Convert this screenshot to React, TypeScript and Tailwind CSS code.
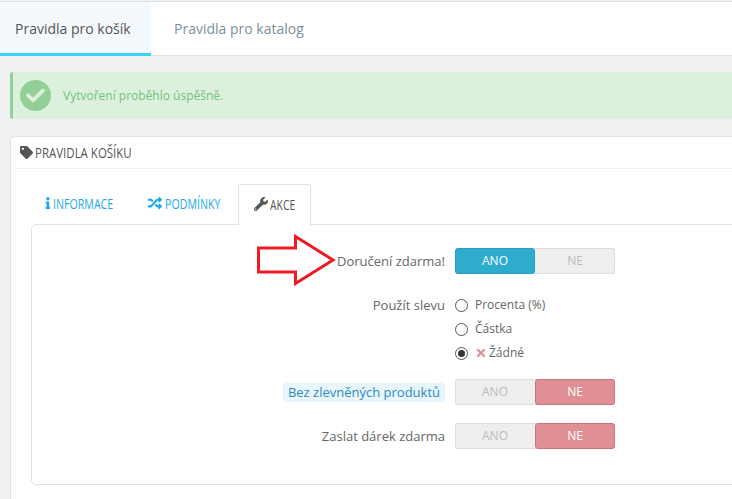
import React from 'react';
import { FaCheck, FaInfo, FaRandom, FaTag, FaTimes, FaWrench } from 'react-icons/fa';

function Switch({ on }: { on: boolean }) {
    return (
        <div className="flex h-[26px] w-[160px] rounded-[3px] bg-[#eeeeee] text-[12px] leading-[26px] text-center shadow-[inset_0_0_0_1px_#dcdcdc]">
            <div className={on ? 'w-[80px] rounded-[3px] bg-[#2eacce] border border-[#2a9dbc] text-white leading-[24px]' : 'w-[80px] text-[#bbbbbb]'}>ANO</div>
            <div className={on ? 'w-[80px] text-[#bbbbbb]' : 'w-[80px] rounded-[3px] bg-[#e08f95] border border-[#cd7379] text-white leading-[24px]'}>NE</div>
        </div>
    );
}

function Radio({ checked, children }: { checked?: boolean; children: React.ReactNode }) {
    return (
        <div className="flex h-[24px] items-center gap-[7px]">
            <span className="flex h-[13px] w-[13px] items-center justify-center rounded-full border border-[#555555] bg-white">
                {checked && <span className="h-[7px] w-[7px] rounded-full bg-[#333333]" />}
            </span>
            <span className="flex items-center gap-[2px] text-[12px] text-[#666666]">{children}</span>
        </div>
    );
}

export default function App() {
    return (
        <div className="h-[499px] w-[732px] overflow-hidden bg-[#eff1f2] font-['Open_Sans',sans-serif] text-[#666666]">
            <div className="mt-px flex h-[55px] border-y border-[#dfe1e2] bg-white text-[14px]">
                <div className="w-[151px] border-b-[3px] border-[#3ed2f0] -mb-px bg-[#f3f9fc] pt-[16px] pl-[15px] text-[#555555]">Pravidla pro košík</div>
                <div className="pt-[16px] pl-[23px] text-[#7b8f9c]">Pravidla pro katalog</div>
            </div>

            <div className="ml-[10px] mt-[16px] flex h-[47px] w-[800px] items-center rounded-[3px] border-l-[3px] border-[#92d097] bg-[#ddf0de] pl-[7px]">
                <span className="flex h-[31px] w-[31px] items-center justify-center rounded-full bg-[#92d097] text-[#ddf0de]">
                    <FaCheck size={19} />
                </span>
                <span className="ml-[12px] text-[12px] text-[#72c279]">Vytvoření proběhlo úspěšně.</span>
            </div>

            <div className="ml-[10px] mt-[17px] w-[800px] rounded-[5px] border border-[#dfe2e4] bg-white pl-[4px] pb-[20px]">
                <div className="flex h-[32px] items-center gap-[2px] border-b border-[#eeeeee] pl-[5px] text-[#555555]">
                    <FaTag size={13} />
                    <span className="origin-left scale-x-[0.82] whitespace-nowrap text-[14px] font-medium leading-none">PRAVIDLA KOŠÍKU</span>
                </div>

                <div className="mt-[15px] ml-[16px]">
                    <div className="flex h-[40px] items-stretch text-[14px] font-medium">
                        <div className="flex w-[101px] items-center pb-[2px] pl-[13px] text-[#1ba9e8]">
                            <FaInfo size={12} />
                            <span className="ml-px origin-left scale-x-[0.76] whitespace-nowrap">INFORMACE</span>
                        </div>
                        <div className="flex w-[106px] items-center pb-[2px] pl-[16px] text-[#1ba9e8]">
                            <FaRandom size={14} />
                            <span className="ml-[3px] origin-left scale-x-[0.76] whitespace-nowrap">PODMÍNKY</span>
                        </div>
                        <div className="relative z-10 -mb-px flex w-[73px] items-center rounded-t-[3px] border border-b-0 border-[#dfe2e4] bg-white pb-[2px] pl-[15px] text-[#555555]">
                            <FaWrench size={14} />
                            <span className="ml-[2px] origin-left scale-x-[0.74] whitespace-nowrap">AKCE</span>
                        </div>
                    </div>

                    <div className="relative h-[261px] rounded-[5px] border border-[#dfe2e4] pt-[23px]">
                        <svg className="absolute left-[224px] top-[9px]" width="80" height="52" viewBox="0 0 80 52" fill="none">
                            <path d="M2.5 14H39.5V2.5L77 26L39.5 49.5V38H2.5Z" stroke="#ed1c24" strokeWidth="3" />
                        </svg>

                        <div className="flex flex-col text-[13px]">
                            <div className="grid grid-cols-[413px_1fr] gap-x-[10px]">
                                <div className="text-right leading-[26px]">Doručení zdarma!</div>
                                <Switch on />
                            </div>

                            <div className="mt-[19px] grid grid-cols-[413px_1fr] gap-x-[10px]">
                                <div className="text-right leading-[24px]">Použít slevu</div>
                                <div>
                                    <Radio>Procenta (%)</Radio>
                                    <Radio>Částka</Radio>
                                    <Radio checked>
                                        <FaTimes size={12} className="text-[#e08f95]" />
                                        Žádné
                                    </Radio>
                                </div>
                            </div>

                            <div className="mt-[14px] grid grid-cols-[413px_1fr] gap-x-[10px]">
                                <div className="flex items-center justify-end">
                                    <span className="rounded-[3px] bg-[#e8f5fb] px-[5px] leading-[19px] text-[#2b8cbd]">Bez zlevněných produktů</span>
                                </div>
                                <Switch on={false} />
                            </div>

                            <div className="mt-[18px] grid grid-cols-[413px_1fr] gap-x-[10px]">
                                <div className="text-right leading-[26px]">Zaslat dárek zdarma</div>
                                <Switch on={false} />
                            </div>
                        </div>
                    </div>
                </div>
            </div>
        </div>
    );
}
